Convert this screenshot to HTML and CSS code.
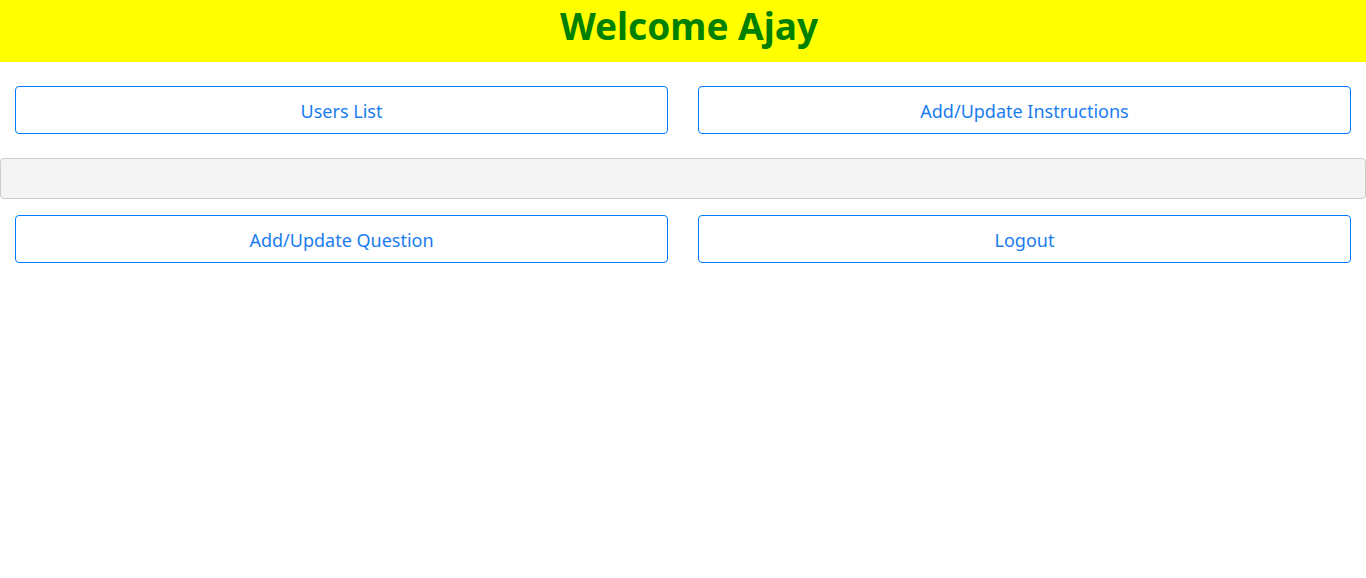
FILE: index.html
```html
<!DOCTYPE html>
<html>
<head>
<meta charset="utf-8">
<link rel="stylesheet" href="styles.css">
</head>
<body>
<header class="banner">
  <h1 class="banner-title">Welcome Ajay</h1>
</header>
<div class="row row-first">
  <div class="col"><button class="btn">Users List</button></div>
  <div class="col"><button class="btn">Add/Update Instructions</button></div>
</div>
<div class="well"></div>
<div class="row">
  <div class="col"><button class="btn">Add/Update Question</button></div>
  <div class="col"><button class="btn">Logout</button></div>
</div>
</body>
</html>
```
FILE: styles.css
```css
* { box-sizing: border-box; }
body {
  margin: 0;
  font-family: "Noto Sans", "Open Sans", sans-serif;
  background: #fff;
  color: #212529;
}
.banner {
  background: #ffff00;
  height: 62px;
  display: flex;
  align-items: flex-start;
  justify-content: center;
  padding-top: 4px;
}
.banner-title {
  margin: 0;
  font-size: 37px;
  font-weight: 700;
  color: #008000;
  line-height: 1.2;
  padding-left: 12px;
}
.row {
  display: flex;
}
.row-first {
  margin-top: 24px;
}
.col {
  flex: 1 1 0;
  padding: 0 15px;
}
.btn {
  display: block;
  width: 100%;
  height: 48px;
  background: #fff;
  border: 1px solid #007bff;
  border-radius: 4px;
  color: #1a7cf0;
  font-family: inherit;
  font-size: 18px;
  padding: 2px 16px 0;
}
.well {
  margin: 24px 0 16px;
  height: 41px;
  background: #f4f4f4;
  border: 1px solid #cccccc;
  border-radius: 4px;
}
```
